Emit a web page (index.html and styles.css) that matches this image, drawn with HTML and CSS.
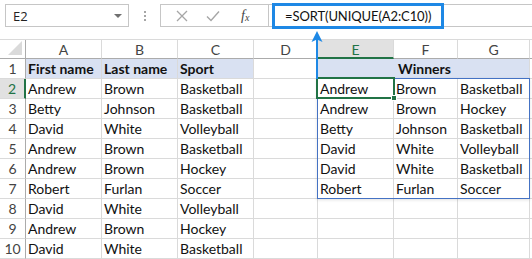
FILE: index.html
```html
<!DOCTYPE html>
<html>
<head>
<meta charset="utf-8">
<link rel="stylesheet" href="styles.css">
</head>
<body>
<div class="page">
  <div class="toolbar">
    <div class="namebox"><span class="nb-text">E2</span><span class="nb-arrow"></span></div>
    <div class="dots"><i></i><i></i><i></i></div>
    <div class="fxbtns">
      <svg class="ico" width="14" height="14" viewBox="0 0 14 14"><path d="M2 2 L12 12 M12 2 L2 12" stroke="#a6a6a6" stroke-width="1.3" fill="none"/></svg>
      <svg class="ico" width="16" height="14" viewBox="0 0 16 14"><path d="M2 7.5 L6 11.5 L14 2.5" stroke="#a6a6a6" stroke-width="1.4" fill="none"/></svg>
      <span class="fx">f<sub>x</sub></span>
    </div>
    <div class="formula">
      <div class="hl">=SORT(UNIQUE(A2:C10))</div>
    </div>
  </div>

  <div class="sheet">
    <div class="corner"><span class="tri"></span></div>
    <div class="ch">A</div>
    <div class="ch">B</div>
    <div class="ch">C</div>
    <div class="ch">D</div>
    <div class="ch sel">E</div>
    <div class="ch">F</div>
    <div class="ch">G</div>
    <div class="ch last"></div>

    <div class="rh">1</div>
    <div class="c hd">First name</div>
    <div class="c hd">Last name</div>
    <div class="c hd">Sport</div>
    <div class="c"></div>
    <div class="c hd win">Winners</div>
    <div class="c last"></div>

    <div class="rh sel">2</div>
    <div class="c">Andrew</div><div class="c">Brown</div><div class="c">Basketball</div><div class="c"></div>
    <div class="c">Andrew</div><div class="c">Brown</div><div class="c">Basketball</div><div class="c last"></div>

    <div class="rh">3</div>
    <div class="c">Betty</div><div class="c">Johnson</div><div class="c">Basketball</div><div class="c"></div>
    <div class="c">Andrew</div><div class="c">Brown</div><div class="c">Hockey</div><div class="c last"></div>

    <div class="rh">4</div>
    <div class="c">David</div><div class="c">White</div><div class="c">Volleyball</div><div class="c"></div>
    <div class="c">Betty</div><div class="c">Johnson</div><div class="c">Basketball</div><div class="c last"></div>

    <div class="rh">5</div>
    <div class="c">Andrew</div><div class="c">Brown</div><div class="c">Basketball</div><div class="c"></div>
    <div class="c">David</div><div class="c">White</div><div class="c">Volleyball</div><div class="c last"></div>

    <div class="rh">6</div>
    <div class="c">Andrew</div><div class="c">Brown</div><div class="c">Hockey</div><div class="c"></div>
    <div class="c">David</div><div class="c">White</div><div class="c">Basketball</div><div class="c last"></div>

    <div class="rh">7</div>
    <div class="c">Robert</div><div class="c">Furlan</div><div class="c">Soccer</div><div class="c"></div>
    <div class="c">Robert</div><div class="c">Furlan</div><div class="c">Soccer</div><div class="c last"></div>

    <div class="rh">8</div>
    <div class="c">David</div><div class="c">White</div><div class="c">Volleyball</div><div class="c"></div>
    <div class="c"></div><div class="c"></div><div class="c"></div><div class="c last"></div>

    <div class="rh">9</div>
    <div class="c">Andrew</div><div class="c">Brown</div><div class="c">Hockey</div><div class="c"></div>
    <div class="c"></div><div class="c"></div><div class="c"></div><div class="c last"></div>

    <div class="rh">10</div>
    <div class="c">David</div><div class="c">White</div><div class="c">Basketball</div><div class="c"></div>
    <div class="c"></div><div class="c"></div><div class="c"></div><div class="c last"></div>

    <div class="range"></div>
    <div class="active"><span class="handle"></span></div>
  </div>

  <svg class="arrow" width="14" height="48" viewBox="0 0 14 48">
    <path d="M7 8 L7 48" stroke="#1e88e5" stroke-width="2" fill="none"/>
    <path d="M7 0 L12.5 11 L7 8.5 L1.5 11 Z" fill="#1e88e5"/>
  </svg>
</div>
</body>
</html>
```

FILE: styles.css
```css
* { box-sizing: border-box; }
html, body { margin: 0; padding: 0; background: #fff; }
.page {
  position: relative;
  width: 532px;
  height: 259px;
  overflow: hidden;
  font-family: Lato, "Liberation Sans", sans-serif;
}
.toolbar {
  display: flex;
  align-items: center;
  height: 23px;
  margin-top: 4px;
  padding-left: 5px;
}
.namebox {
  width: 124px;
  height: 23px;
  border: 1px solid #c6c6c6;
  display: flex;
  align-items: center;
  justify-content: space-between;
  padding: 0 6px 0 7px;
}
.nb-text {
  font-family: "Open Sans", "Noto Sans", sans-serif;
  font-size: 13px;
  color: #222;
}
.nb-arrow {
  width: 0; height: 0;
  border-left: 4px solid transparent;
  border-right: 4px solid transparent;
  border-top: 4px solid #707070;
}
.dots {
  width: 31px;
  height: 23px;
  display: flex;
  flex-direction: column;
  align-items: center;
  justify-content: center;
  gap: 2px;
}
.dots i {
  display: block;
  width: 2px; height: 2px;
  background: #a6a6a6;
}
.fxbtns {
  width: 109px;
  height: 23px;
  border: 1px solid #c6c6c6;
  display: flex;
  align-items: center;
  padding-left: 14px;
  gap: 16px;
}
.fx {
  font-family: "Liberation Serif", serif;
  font-style: italic;
  font-size: 14px;
  color: #444;
  margin-left: 4px;
}
.fx sub { font-size: 10px; vertical-align: -1px; }
.formula {
  flex: 1;
  height: 23px;
  border-top: 1px solid #c6c6c6;
  border-bottom: 1px solid #c6c6c6;
  display: flex;
  align-items: center;
  padding-left: 3px;
}
.hl {
  width: 172px;
  height: 26px;
  flex: none;
  border: 3px solid #1e88e5;
  display: flex;
  align-items: center;
  padding-left: 10px;
  font-size: 13px;
  letter-spacing: -0.1px;
  color: #111;
}
.sheet {
  position: relative;
  margin-top: 12px;
  display: grid;
  grid-template-columns: 26px 76px 76px 76px 64px 76px 64px 72px 2px;
  grid-template-rows: 19px repeat(10, 20px);
  border-top: 1px solid #dadada;
  font-size: 14px;
  color: #111;
}
.corner {
  border-right: 1px solid #ababab;
  border-bottom: 1px solid #ababab;
  position: relative;
}
.tri {
  position: absolute;
  right: 3px; bottom: 3px;
  width: 0; height: 0;
  border-left: 14px solid transparent;
  border-bottom: 14px solid #dadada;
}
.ch {
  border-right: 1px solid #dadada;
  border-bottom: 1px solid #ababab;
  text-align: center;
  color: #444;
  line-height: 19px;
  font-size: 14px;
}
.ch.sel {
  background: #e1e1e1;
  color: #217346;
  border-bottom: 2px solid #217346;
}
.ch.last { border-right: none; }
.rh {
  border-right: 1px solid #ababab;
  border-bottom: 1px solid #dadada;
  text-align: center;
  color: #444;
  line-height: 20px;
  font-size: 14px;
}
.rh.sel {
  background: #e1e1e1;
  color: #217346;
  border-right: 2px solid #217346;
}
.c {
  border-right: 1px solid #dadada;
  border-bottom: 1px solid #dadada;
  padding-left: 2px;
  line-height: 20px;
  white-space: nowrap;
  overflow: hidden;
}
.c.last { border-right: none; }
.hd {
  background: #d9e1f2;
  font-weight: bold;
}
.win {
  grid-column: span 3;
  text-align: center;
}
.range {
  position: absolute;
  grid-column: 6 / 9;
  grid-row: 3 / 9;
  top: -1px; left: -1px; right: 0; bottom: 0;
  border: 1px solid #4472c4;
  box-shadow: 0 1px 3px rgba(0,0,0,0.12);
  pointer-events: none;
}
.active {
  position: absolute;
  grid-column: 6 / 7;
  grid-row: 3 / 4;
  top: -2px; left: -2px; right: -1px; bottom: 0;
  border: 2px solid #217346;
}
.handle {
  position: absolute;
  right: -4px;
  bottom: -4px;
  width: 6px;
  height: 6px;
  background: #217346;
  border: 1px solid #fff;
}
.arrow {
  position: absolute;
  left: 310px;
  top: 31px;
}
```
